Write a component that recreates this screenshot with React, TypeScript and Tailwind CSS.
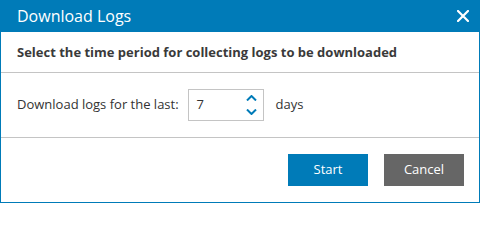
export default function App() {
  return (
    <div
      className="w-[480px] flex flex-col bg-white border border-t-0 border-[#007bb8] text-[#333333]"
      style={{ fontFamily: '"Open Sans", "Liberation Sans", sans-serif' }}
    >
      {/* title bar */}
      <div className="h-[32px] shrink-0 flex items-center justify-between bg-[#007bb8] pl-[16px] pr-[8px] text-white">
        <span className="text-[16px] leading-none">Download Logs</span>
        <button type="button" aria-label="Close" className="w-[16px] h-[16px] flex items-center justify-center">
          <svg width="12" height="12" viewBox="0 0 12 12">
            <path d="M1 1 L11 11 M11 1 L1 11" stroke="white" strokeWidth="2.2" strokeLinecap="square" />
          </svg>
        </button>
      </div>

      <div className="h-[41px] shrink-0 flex items-center px-[16px] border-b border-[#c4c4c4]">
        <h2 className="text-[13px] font-bold text-[#3a3a3a] leading-[20px]">
          Select the time period for collecting logs to be downloaded
        </h2>
      </div>

      <div className="h-[65px] shrink-0 flex items-center gap-[9px] px-[16px] border-b border-[#c4c4c4] text-[13px]">
        <span>Download logs for the last:</span>
        <div className="w-[76px] h-[32px] flex items-center justify-between border border-[#c4c4c4] pl-[8px] pr-[6px]">
          <span>7</span>
          <div className="flex flex-col gap-[8px]">
            <svg width="11" height="6" viewBox="0 0 11 6">
              <path d="M1 5.5 L5.5 1 L10 5.5" fill="none" stroke="#007bb8" strokeWidth="2" />
            </svg>
            <svg width="11" height="6" viewBox="0 0 11 6">
              <path d="M1 0.5 L5.5 5 L10 0.5" fill="none" stroke="#007bb8" strokeWidth="2" />
            </svg>
          </div>
        </div>
        <span className="ml-[3px]">days</span>
      </div>

      <div className="h-[64px] shrink-0 flex items-center justify-end gap-[16px] px-[15px]">
        <button type="button" className="w-[80px] h-[32px] bg-[#007bb8] text-white text-[13px]">
          Start
        </button>
        <button type="button" className="w-[80px] h-[32px] bg-[#666666] text-white text-[13px]">
          Cancel
        </button>
      </div>
    </div>
  );
}
